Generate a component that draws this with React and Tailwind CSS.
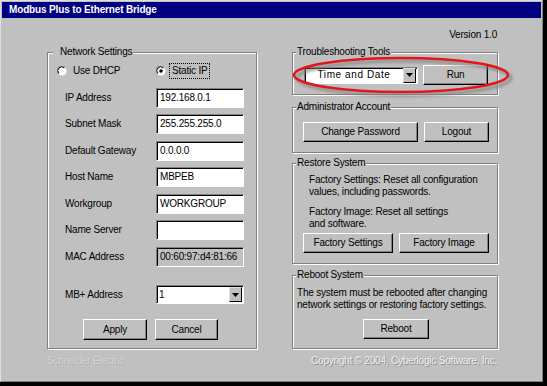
import React from "react";

const font = "font-['Liberation_Sans',Arial,sans-serif]";
const btn =
  "h-[20px] flex items-center justify-center bg-[#c0c0c0] border border-t-white border-l-white border-r-black border-b-black shadow-[inset_-1px_-1px_0_#808080] text-black text-[10px] leading-[12px]";
const sunken =
  "border border-t-[#808080] border-l-[#808080] border-r-white border-b-white shadow-[inset_1px_1px_0_#000]";

function Group({ label, className = "", legendClass = "", children }) {
  return (
    <fieldset
      className={`border border-[#808080] shadow-[inset_1px_1px_0_#fff,1px_1px_0_#fff] ${className}`}
    >
      <legend className={`bg-[#c0c0c0] leading-[12px] h-[12px] ${legendClass}`}>{label}</legend>
      {children}
    </fieldset>
  );
}

function Radio({ checked }) {
  return (
    <svg width="10" height="10" viewBox="0 0 10 10" className="shrink-0">
      <circle cx="5" cy="5" r="4.5" fill="#fff" />
      <path d="M1.2 8 A4.5 4.5 0 0 1 8 1.2" stroke="#808080" strokeWidth="1" fill="none" />
      <path d="M2 7.3 A3.5 3.5 0 0 1 7.3 2" stroke="#000" strokeWidth="1" fill="none" />
      {checked && <circle cx="5" cy="5" r="1.8" fill="#000" />}
    </svg>
  );
}

function DropBtn() {
  return (
    <div className="w-[13px] h-[15px] bg-[#c0c0c0] border border-t-[#dfdfdf] border-l-[#dfdfdf] border-r-black border-b-black flex items-center justify-center shrink-0">
      <svg width="7" height="4" viewBox="0 0 7 4">
        <path d="M0 0 H7 L3.5 4 Z" fill="#000" />
      </svg>
    </div>
  );
}

function Row({ label, value, mt, disabled }) {
  return (
    <div className={`flex items-center h-[20px] ${mt}`}>
      <div className="w-[108px] pl-[17px]">{label}</div>
      <div
        className={`h-[20px] w-[88px] ${sunken} pl-[3px] flex items-center ${
          disabled ? "bg-[#c0c0c0]" : "bg-white"
        }`}
      >
        {value}
      </div>
    </div>
  );
}

export default function App() {
  return (
    <div className={`w-[547px] h-[386px] bg-black ${font} text-[10px] leading-[12px] tracking-[-0.2px] text-black`}>
      <div className="relative w-[543px] h-[382px] bg-[#c0c0c0] border border-t-[#dfdfdf] border-l-[#dfdfdf] border-r-[#808080] border-b-[#808080] flex flex-col">
        <div className="mx-[1px] mt-[1px] h-[16px] bg-[#000080] text-white font-bold text-[10px] tracking-[-0.15px] pl-[7px] flex items-center">
          Modbus Plus to Ethernet Bridge
        </div>

        <div className="mt-[11px] h-[12px] text-right pr-[45px]">Version 1.0</div>

        <div className="flex mt-[5px] pl-[46px]">
          {/* Left column */}
          <Group label="Network Settings" className="w-[210px] h-[303px]" legendClass="ml-[5px] pl-[7px] pr-[1px]">
            <div className="mt-[5px] h-[16px] flex items-center">
              <div className="w-[108px] pl-[9px] flex items-center">
                <Radio />
                <span className="ml-[6px]">Use DHCP</span>
              </div>
              <div className="flex items-center">
                <Radio checked />
                <span className="ml-[3px] h-[16px] px-[2px] border border-dotted border-black flex items-center">
                  Static IP
                </span>
              </div>
            </div>
            <Row label="IP Address" value="192.168.0.1" mt="mt-[9px]" />
            <Row label="Subnet Mask" value="255.255.255.0" mt="mt-[6px]" />
            <Row label="Default Gateway" value="0.0.0.0" mt="mt-[7px]" />
            <Row label="Host Name" value="MBPEB" mt="mt-[6px]" />
            <Row label="Workgroup" value="WORKGROUP" mt="mt-[7px]" />
            <Row label="Name Server" value="" mt="mt-[6px]" />
            <Row label="MAC Address" value="00:60:97:d4:81:66" mt="mt-[7px]" disabled />
            <div className="flex items-center h-[19px] mt-[18px]">
              <div className="w-[108px] pl-[17px]">MB+ Address</div>
              <div className={`h-[19px] w-[88px] ${sunken} bg-white flex items-center justify-between pl-[2px] pr-[1px]`}>
                <span>1</span>
                <DropBtn />
              </div>
            </div>
            <div className="flex mt-[15px] pl-[35px]">
              <div className={`${btn} w-[64px] h-[21px]`}>Apply</div>
              <div className={`${btn} w-[63px] h-[21px] ml-[8px]`}>Cancel</div>
            </div>
          </Group>

          {/* Right column */}
          <div className="ml-[35px] w-[207px] flex flex-col">
            <Group label="Troubleshooting Tools" className="w-[206px] h-[49px]" legendClass="ml-[3px] pl-[1px] pr-[1px]">
              <div className="flex items-center h-[20px] mt-[7px]">
                <div className={`ml-[11px] w-[114px] h-[17px] ${sunken} bg-white flex items-center justify-between pr-[1px]`}>
                  <span className="flex-1 text-center tracking-[0.6px]">Time and Date</span>
                  <DropBtn />
                </div>
                <div className={`${btn} ml-[5px] w-[65px]`}>Run</div>
              </div>
            </Group>

            <Group label="Administrator Account" className="mt-[6px] w-[206px] h-[52px]" legendClass="ml-[3px] pl-[1px] pr-[1px]">
              <div className="flex mt-[9px]">
                <div className={`${btn} ml-[10px] w-[115px]`}>Change Password</div>
                <div className={`${btn} ml-[6px] w-[65px]`}>Logout</div>
              </div>
            </Group>

            <Group label="Restore System" className="mt-[4px] w-[206px] h-[107px]" legendClass="ml-[3px] pl-[1px] pr-[1px]">
              <div className="mt-[5px] pl-[16px]">
                <p>Factory Settings: Reset all configuration</p>
                <p>values, including passwords.</p>
                <p className="mt-[8px]">Factory Image: Reset all settings</p>
                <p>and software.</p>
              </div>
              <div className="flex mt-[3px]">
                <div className={`${btn} ml-[10px] w-[90px]`}>Factory Settings</div>
                <div className={`${btn} ml-[6px] w-[90px]`}>Factory Image</div>
              </div>
            </Group>

            <Group label="Reboot System" className="mt-[5px] w-[206px] h-[80px]" legendClass="ml-[3px] pl-[1px] pr-[1px]">
              <div className="mt-[6px] pl-[4px]">
                <p>The system must be rebooted after changing</p>
                <p>network settings or restoring factory settings.</p>
              </div>
              <div className="flex mt-[8px]">
                <div className={`${btn} ml-[70px] w-[66px]`}>Reboot</div>
              </div>
            </Group>
          </div>
        </div>

        <div className="flex mt-[6px] pl-[46px]">
          <div className="w-[263px] text-[#d4d4d4] [text-shadow:1px_1px_0_#b0b0b0]">Schneider Electric</div>
          <div className="ml-[1px] text-[#f0f0f0] [text-shadow:1px_1px_0_#8c8c8c]">
            Copyright © 2004, Cyberlogic Software, Inc.
          </div>
        </div>

        <svg
          className="absolute left-0 top-0 pointer-events-none"
          width="543"
          height="382"
          viewBox="0 0 543 382"
        >
          <defs>
            <filter id="sh" x="-20%" y="-50%" width="140%" height="200%">
              <feGaussianBlur stdDeviation="1.5" />
            </filter>
          </defs>
          <ellipse cx="403" cy="77" rx="107" ry="17" fill="none" stroke="#808080" strokeWidth="3" filter="url(#sh)" opacity="0.8" />
          <ellipse cx="400" cy="74" rx="107" ry="17" fill="none" stroke="#e3161c" strokeWidth="2.5" />
        </svg>
      </div>
    </div>
  );
}
